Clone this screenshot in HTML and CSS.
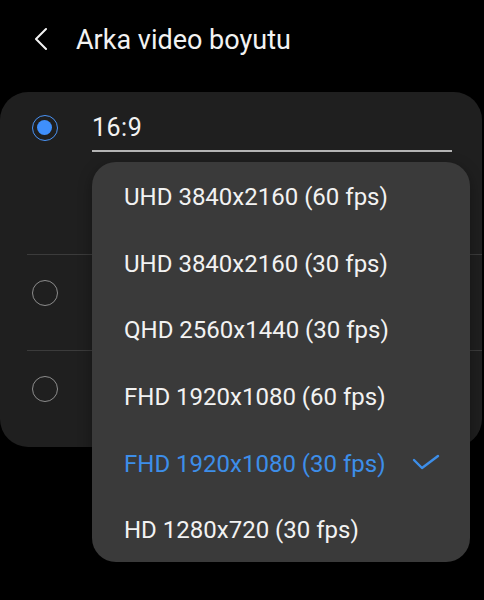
FILE: index.html
```html
<!DOCTYPE html>
<html lang="tr">
<head>
  <meta charset="UTF-8" />
  <meta name="viewport" content="width=device-width, initial-scale=1.0"/>
  <title>Arka video boyutu</title>
  <link rel="stylesheet" href="styles.css">
</head>
<body>
  <!-- Header -->
  <div class="header">
    <svg class="back" width="14" height="24" viewBox="0 0 14 24">
      <polyline points="11,2 1,12 11,22" fill="none" stroke="#f2f2f2" stroke-width="2" stroke-linecap="round" stroke-linejoin="round"/>
    </svg>
    <h1 class="title">Arka video boyutu</h1>
  </div>

  <!-- Ratio list -->
  <div class="card">
    <div class="row row-first">
      <span class="radio checked"></span>
      <div class="row-body">
        <div class="ratio">16:9</div>
        <div class="spinner-line"></div>
      </div>
    </div>
    <div class="row">
      <span class="radio"></span>
      <div class="row-body"></div>
    </div>
    <div class="row row-last">
      <span class="radio"></span>
      <div class="row-body"></div>
    </div>

    <!-- Dropdown popup -->
    <ul class="popup">
      <li>UHD 3840x2160 (60 fps)</li>
      <li>UHD 3840x2160 (30 fps)</li>
      <li>QHD 2560x1440 (30 fps)</li>
      <li>FHD 1920x1080 (60 fps)</li>
      <li class="active">FHD 1920x1080 (30 fps)
        <svg class="check" width="28" height="18" viewBox="0 0 28 18">
          <polyline points="2,6 10,14 26,2" fill="none" stroke="#3d8ee9" stroke-width="2.4" stroke-linecap="round" stroke-linejoin="round"/>
        </svg>
      </li>
      <li>HD 1280x720 (30 fps)</li>
    </ul>
  </div>
</body>
</html>
```

FILE: styles.css
```css
/* Global */
body {
  margin: 0;
  background: #000;
  color: #f2f2f2;
  font-family: Roboto, "Noto Sans", sans-serif;
  width: 484px;
  height: 600px;
  overflow: hidden;
}

/* Header */
.header {
  display: flex;
  align-items: center;
  height: 80px;
  padding-left: 35px;
  box-sizing: border-box;
}

.back {
  margin-top: -2px;
}

.title {
  margin: 0 0 0 27px;
  font-size: 27px;
  font-weight: 400;
}

/* Card */
.card {
  position: relative;
  margin: 12px 2px 0 0;
  background: #1f1f1f;
  border-radius: 28px;
}

.row {
  display: flex;
  height: 96px;
  padding: 25px 32px 0 5px;
  box-sizing: border-box;
  border-top: 1px solid #3b3b3b;
  margin-left: 27px;
}

.row-first {
  height: 162px;
  padding-top: 23px;
  border-top: none;
}

.row-last {
  height: 97px;
}

.radio {
  flex: none;
  width: 26px;
  height: 26px;
  border-radius: 50%;
  border: 1.5px solid #8c8c8c;
  box-sizing: border-box;
  position: relative;
}

.radio.checked {
  border-color: #4a93f5;
}

.radio.checked::after {
  content: "";
  position: absolute;
  left: 4px;
  top: 4px;
  width: 15px;
  height: 15px;
  border-radius: 50%;
  background: #3f8ffb;
}

.row-body {
  flex: 1;
  margin-left: 34px;
  margin-right: -2px;
}

.ratio {
  font-size: 25px;
  line-height: 26px;
  letter-spacing: 0.5px;
}

.spinner-line {
  margin-top: 9px;
  height: 1.5px;
  background: #b4b4b4;
}

/* Popup */
.popup {
  position: absolute;
  left: 92px;
  top: 70px;
  width: 378px;
  height: 400px;
  margin: 0;
  padding: 2px 0 0 0;
  box-sizing: border-box;
  list-style: none;
  background: #3a3a3a;
  border-radius: 24px;
  box-shadow: 0 4px 14px rgba(0, 0, 0, 0.35);
  overflow: hidden;
}

.popup li {
  display: flex;
  align-items: center;
  height: 66.6px;
  padding-left: 32px;
  font-size: 24px;
  color: #f2f2f2;
}

.popup li.active {
  color: #3d8ee9;
}

.check {
  margin-left: auto;
  margin-right: 30px;
  margin-top: -2px;
}
```
